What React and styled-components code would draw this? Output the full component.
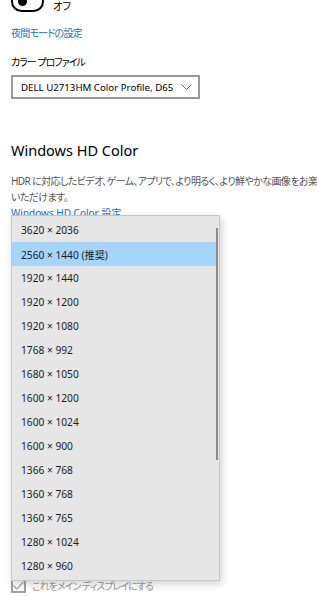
import * as React from 'react';
import styled, { createGlobalStyle } from 'styled-components';

const GlobalStyle = createGlobalStyle`
  html, body {
    margin: 0;
    padding: 0;
    background: #ffffff;
    overflow: hidden;
  }
  body {
    font-family: "Noto Sans", "Noto Sans CJK JP", sans-serif;
    font-feature-settings: "palt";
    color: #000000;
  }
`;

const resolutions = [
  '3620 × 2036',
  '2560 × 1440 (推奨)',
  '1920 × 1440',
  '1920 × 1200',
  '1920 × 1080',
  '1768 × 992',
  '1680 × 1050',
  '1600 × 1200',
  '1600 × 1024',
  '1600 × 900',
  '1366 × 768',
  '1360 × 768',
  '1360 × 765',
  '1280 × 1024',
  '1280 × 960',
];

const Page = styled.div`
  position: relative;
  width: 317px;
  height: 596px;
  padding-left: 11px;
  box-sizing: border-box;
  overflow: hidden;
`;

const ToggleRow = styled.div`
  display: flex;
  align-items: flex-end;
  gap: 9px;
  margin-top: -9px;
  height: 21px;
`;

const Toggle = styled.div`
  width: 33px;
  height: 21px;
  box-sizing: border-box;
  border: 2px solid #000000;
  border-radius: 11px;
  display: flex;
  align-items: center;
  padding-left: 5px;
  &::before {
    content: '';
    width: 9px;
    height: 9px;
    border-radius: 50%;
    background: #000000;
  }
`;

const ToggleLabel = styled.span`
  font-size: 10.5px;
  line-height: 12px;
  letter-spacing: -0.5px;
`;

const Link = styled.div`
  font-size: 10px;
  line-height: 16px;
  letter-spacing: ${(p) => p.$spacing || 0}px;
  color: #1f6fb5;
  margin-top: ${(p) => p.$top}px;
`;

const Label = styled.div`
  font-size: 10px;
  line-height: 16px;
  letter-spacing: -1px;
  margin-top: 13px;
`;

const Select = styled.div`
  margin-top: 5px;
  width: 189px;
  height: 24px;
  box-sizing: border-box;
  border: 2px solid #999999;
  display: flex;
  align-items: center;
  justify-content: space-between;
  padding: 0 6px 0 8px;
  font-size: 9.7px;
  white-space: nowrap;
  color: #000000;
  & svg {
    flex: none;
  }
`;

const Heading = styled.h2`
  margin: 39px 0 0;
  font-size: 14.5px;
  line-height: 24px;
  font-weight: 400;
`;

const Paragraph = styled.p`
  margin: 11px 0 0;
  font-size: 10px;
  line-height: 16px;
  letter-spacing: -0.6px;
  color: #555555;
  white-space: nowrap;
`;

const Hidden = styled.div`
  height: 357px;
`;

const CheckRow = styled.div`
  display: flex;
  align-items: center;
  gap: 6px;
  font-size: 10px;
  letter-spacing: -1px;
  color: #9a9a9a;
`;

const CheckBox = styled.div`
  width: 15px;
  height: 15px;
  box-sizing: border-box;
  border: 2px solid #a0a0a0;
  display: flex;
  align-items: center;
  justify-content: center;
`;

const Dropdown = styled.div`
  position: absolute;
  left: 11px;
  top: 215px;
  width: 209px;
  height: 366px;
  box-sizing: border-box;
  background: #e6e6e6;
  border: 1px solid #c6c6c6;
  box-shadow: 2px 3px 8px rgba(0, 0, 0, 0.18);
  padding: 2px 3px 0 0;
`;

const Item = styled.div`
  height: 24px;
  display: flex;
  align-items: center;
  padding-left: 9px;
  font-size: 10.2px;
  color: #1a1a1a;
  background: ${(p) => (p.$selected ? '#a6d4fa' : 'transparent')};
`;

const ScrollThumb = styled.div`
  position: absolute;
  right: 1px;
  top: 12px;
  width: 2px;
  height: 232px;
  background: #8a8a8a;
`;

export default function App() {
  return (
    <>
      <GlobalStyle />
      <Page>
        <ToggleRow>
          <Toggle />
          <ToggleLabel>オフ</ToggleLabel>
        </ToggleRow>
        <Link $top={13} $spacing={-0.75}>夜間モードの設定</Link>
        <Label>カラー プロファイル</Label>
        <Select>
          DELL U2713HM Color Profile, D65
          <svg width="11" height="6" viewBox="0 0 11 6" fill="none">
            <path d="M0.5 0.5L5.5 5.5L10.5 0.5" stroke="#666" strokeWidth="1" />
          </svg>
        </Select>
        <Heading>Windows HD Color</Heading>
        <Paragraph>
          HDR に対応したビデオ、ゲーム、アプリで、より明るく、より鮮やかな画像をお楽しみ
          <br />
          いただけます。
        </Paragraph>
        <Link $top={0}>Windows HD Color 設定</Link>
        <Hidden />
        <CheckRow>
          <CheckBox>
            <svg width="11" height="9" viewBox="0 0 11 9" fill="none">
              <path d="M0.5 4.5L3.8 7.8L10.5 0.8" stroke="#a0a0a0" strokeWidth="1.2" />
            </svg>
          </CheckBox>
          これをメイン ディスプレイにする
        </CheckRow>
        <Dropdown>
          {resolutions.map((r, i) => (
            <Item key={r} $selected={i === 1}>
              {r}
            </Item>
          ))}
          <ScrollThumb />
        </Dropdown>
      </Page>
    </>
  );
}
